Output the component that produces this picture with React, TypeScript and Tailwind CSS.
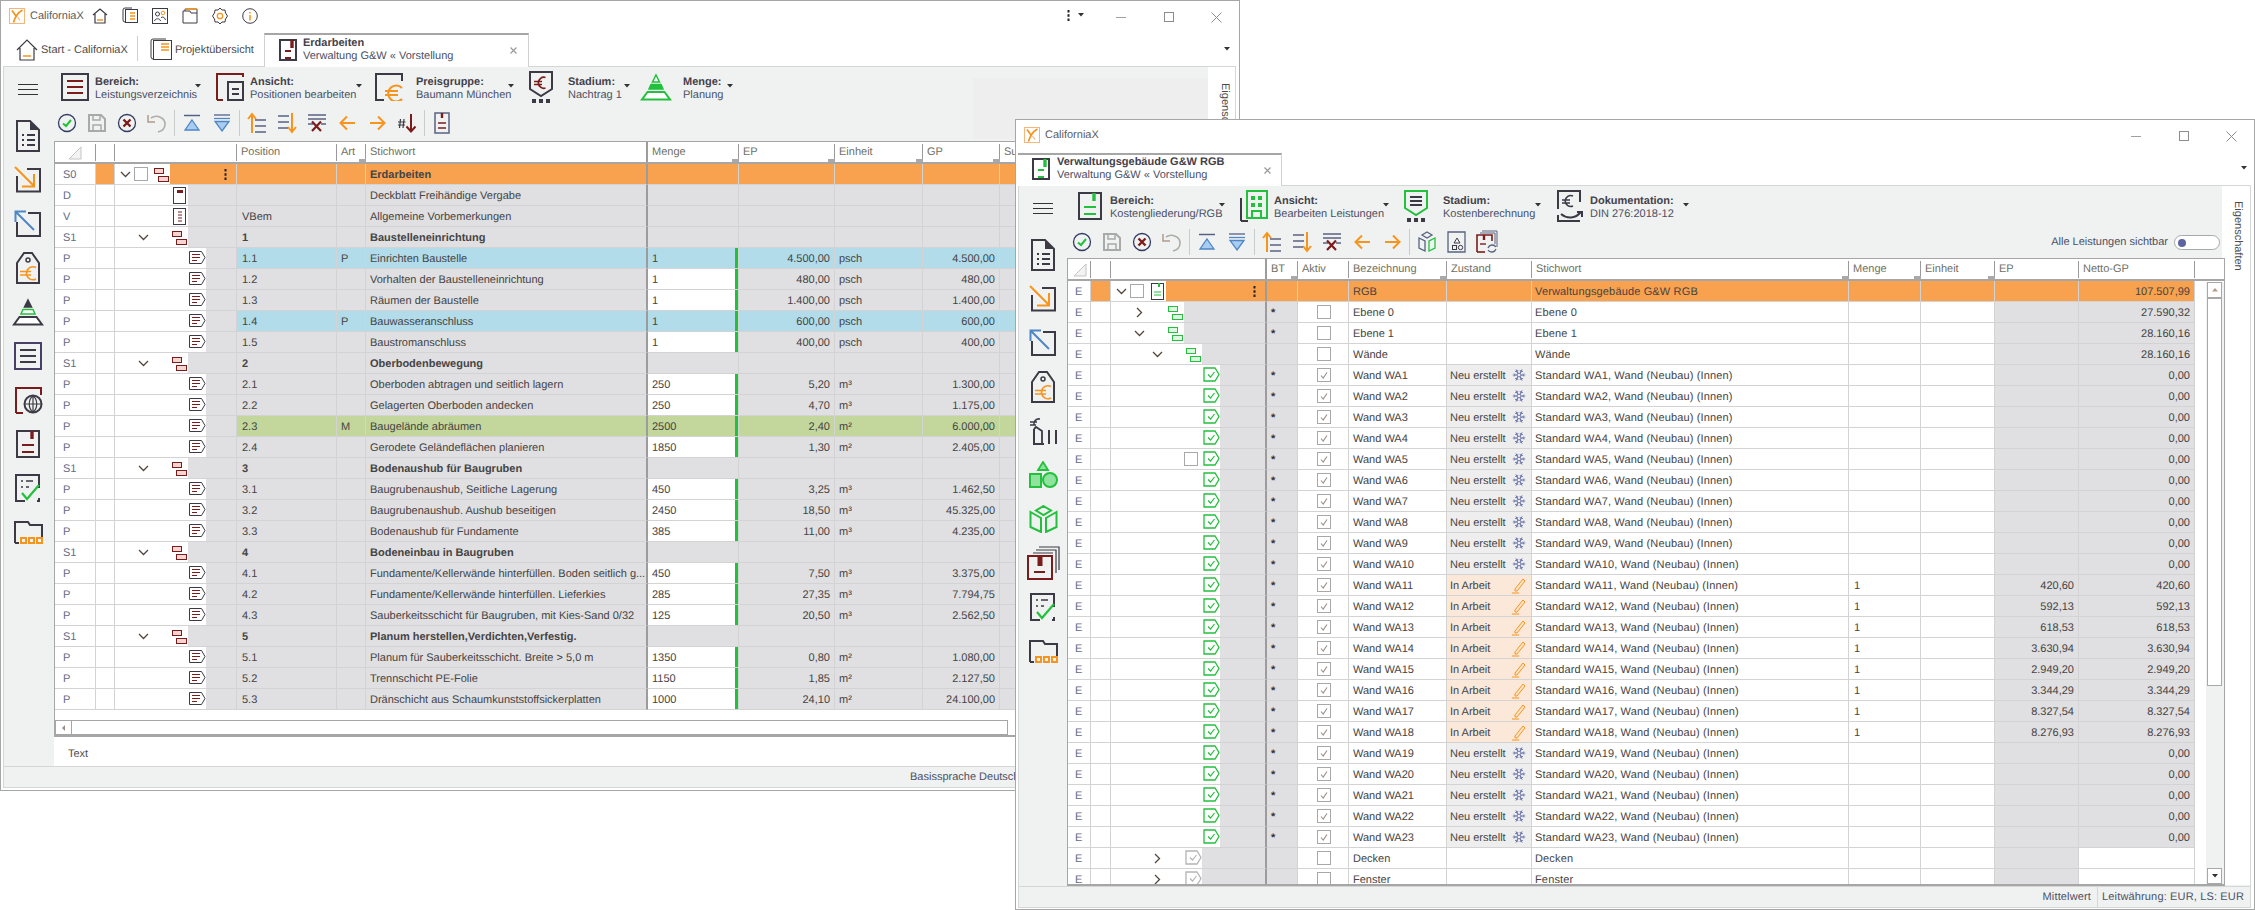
import React from 'react';
import { Snowflake } from 'lucide-react';

const DK = '#3d3a45';
const RD = '#7b1c1c';
const OR = '#f7941d';
const GR = '#22c03c';
const BL = '#4f86c6';
const SL = '#5a6280';

type IcoProps = { w: number; h: number; className?: string; children: React.ReactNode };

const Ico = ({ w, h, className = '', children }: IcoProps) => (
  <svg width={w} height={h} viewBox={`0 0 ${w} ${h}`} fill="none" className={`block shrink-0 ${className}`}>
    {children}
  </svg>
);

/* small grid icons */
const ChevDown = ({ className = '' }: { className?: string }) => (
  <Ico w={11} h={7} className={className}>
    <path d="M1 1L5.5 5.5L10 1" stroke="#54463c" strokeWidth="1.3" />
  </Ico>
);
const ChevRight = ({ className = '' }: { className?: string }) => (
  <Ico w={7} h={11} className={className}>
    <path d="M1 1L5.5 5.5L1 10" stroke="#54463c" strokeWidth="1.3" />
  </Ico>
);
const TreeIco = ({ c, f, className = '' }: { c: string; f: string; className?: string }) => (
  <Ico w={15} h={14} className={className}>
    <rect x="0.5" y="0.5" width="9" height="5" fill={f} stroke={c} />
    <rect x="4.5" y="8.5" width="10" height="5" fill={f} stroke={c} />
  </Ico>
);
const NoteIco = ({ className = '' }: { className?: string }) => (
  <Ico w={17} h={13} className={className}>
    <path d="M0.5 0.5H12.5L16 6.5L12.5 12.5H0.5Z" fill="#fff" stroke={DK} />
    <path d="M3 3.5H11M3 6.5H11M3 9.5H8" stroke={RD} />
  </Ico>
);
const LeafIco = ({ c = GR, className = '' }: { c?: string; className?: string }) => (
  <Ico w={17} h={15} className={className}>
    <path d="M1 1H12L16 7.5L12 14H1Z" fill="#fff" stroke={c} strokeWidth="1.3" />
    <path d="M5 7.5L7.5 10L11.5 5" stroke={c} strokeWidth="1.2" />
  </Ico>
);
const SmallDoc = ({ lines = 3, className = '' }: { lines?: number; className?: string }) => (
  <Ico w={13} h={17} className={className}>
    <rect x="0.5" y="0.5" width="12" height="16" fill="#fff" stroke={DK} />
    {lines === 1 ? <rect x="4" y="3" width="6" height="3" fill={RD} /> : <path d="M5 4H9M5 7H9M5 10H9M5 13H9" stroke={RD} />}
  </Ico>
);
const Dots = () => (
  <Ico w={3} h={11}>
    <path d="M1.5 0V2.5M1.5 4.2V6.7M1.5 8.4V10.9" stroke="#222" strokeWidth="2" />
  </Ico>
);
const Check = ({ on, className = '' }: { on?: boolean; className?: string }) => (
  <Ico w={14} h={14} className={className}>
    <rect x="0.5" y="0.5" width="13" height="13" fill="#fff" stroke="#a8a8a8" />
    {on && <path d="M4 7.5L6.2 10L10 4.5" stroke="#9a8f86" strokeWidth="1.1" />}
  </Ico>
);
const Pencil = () => (
  <Ico w={14} h={17}>
    <path d="M3 12L11 2L13 4L5 14H3Z" fill="#fde4c8" stroke={OR} />
    <path d="M0 16H7" stroke={OR} />
  </Ico>
);
const Corner = () => (
  <Ico w={14} h={14}>
    <path d="M13 1V13H1Z" fill="#f3f3f3" stroke="#c4c4c4" />
  </Ico>
);

/* toolbar icons */
const TbCheck = () => (
  <Ico w={20} h={20}>
    <circle cx="10" cy="10" r="8.5" stroke="#333b63" strokeWidth="1.3" />
    <path d="M6 10.5L9 13L14 7" stroke={GR} strokeWidth="2" />
  </Ico>
);
const TbSave = () => (
  <Ico w={20} h={20}>
    <path d="M2 2H14L18 6V18H2Z" stroke="#a9a9a9" strokeWidth="2" />
    <path d="M6 2V7H13V2M6 18V12H14V18" stroke="#a9a9a9" strokeWidth="1.5" />
  </Ico>
);
const TbCancel = () => (
  <Ico w={20} h={20}>
    <circle cx="10" cy="10" r="8.5" stroke="#333b63" strokeWidth="1.3" />
    <path d="M6.5 6.5L13.5 13.5M13.5 6.5L6.5 13.5" stroke={RD} strokeWidth="2.4" />
  </Ico>
);
const TbUndo = () => (
  <Ico w={20} h={20}>
    <path d="M4 5C10 1 18 5 18 11C18 15 15 18 11 19" stroke="#b0aca8" strokeWidth="1.6" />
    <path d="M1 2V9H8" stroke="#b29c8a" strokeWidth="1.5" />
  </Ico>
);
const TbTop = () => (
  <Ico w={20} h={20}>
    <path d="M2 2.5H18" stroke="#55608a" strokeWidth="1.5" />
    <path d="M10 7L17 17H3Z" fill="#a9cdf0" stroke={BL} strokeWidth="1.3" />
  </Ico>
);
const TbBottom = () => (
  <Ico w={20} h={20}>
    <path d="M2 2H18" stroke="#55608a" strokeWidth="1.3" />
    <path d="M2 5.5H18" stroke={BL} strokeWidth="1.3" />
    <path d="M10 18L17 8.5H3Z" fill="#a9cdf0" stroke={BL} strokeWidth="1.3" />
  </Ico>
);
const TbIndentUp = () => (
  <Ico w={20} h={22}>
    <path d="M5 21V2M1 7L5 2L9 7" stroke={OR} strokeWidth="2" />
    <path d="M8 8H19M8 14H19M8 20H19" stroke={SL} strokeWidth="1.4" />
  </Ico>
);
const TbIndentDown = () => (
  <Ico w={20} h={22}>
    <path d="M15 1V20M11 15L15 20L19 15" stroke={OR} strokeWidth="2" />
    <path d="M1 4H12M1 10H12M1 16H11" stroke={SL} strokeWidth="1.4" />
  </Ico>
);
const TbDelete = () => (
  <Ico w={20} h={20}>
    <path d="M1 2H19M1 6H19M1 11H6M14 11H19" stroke={SL} strokeWidth="1.4" />
    <path d="M5 8.5L14 18M14 8.5L5 18" stroke={RD} strokeWidth="2.2" />
  </Ico>
);
const TbLeft = () => (
  <Ico w={17} h={16}>
    <path d="M16 8H2M8 1.5L1.5 8L8 14.5" stroke={OR} strokeWidth="2" />
  </Ico>
);
const TbRight = () => (
  <Ico w={17} h={16}>
    <path d="M1 8H15M9 1.5L15.5 8L9 14.5" stroke={OR} strokeWidth="2" />
  </Ico>
);
const TbHash = () => (
  <Ico w={20} h={20}>
    <path d="M3.5 6L2.5 15M7 6L6 15M1 9H8.5M1 12H8" stroke={DK} strokeWidth="1.2" />
    <path d="M14 1V18M9.5 13.5L14 18.5L18.5 13.5" stroke={RD} strokeWidth="2" />
  </Ico>
);
const TbDoc = () => (
  <Ico w={16} h={22}>
    <rect x="1" y="1" width="14" height="20" stroke={SL} strokeWidth="1.5" />
    <path d="M8 1V6" stroke={RD} strokeWidth="2.4" />
    <path d="M4 11H12M4 16H12" stroke={RD} strokeWidth="1.6" />
  </Ico>
);
const TbCube = () => (
  <Ico w={20} h={22}>
    <path d="M10 1L15 4L10 7L5 4Z" stroke={SL} strokeWidth="1.3" />
    <path d="M2 7L8 10V20L2 17Z" stroke={SL} strokeWidth="1.3" />
    <path d="M18 7L12 10V20L18 17Z" stroke={GR} strokeWidth="1.3" />
  </Ico>
);
const TbShapes = () => (
  <Ico w={20} h={22}>
    <path d="M1 1H18V21H1Z" stroke={SL} strokeWidth="1.3" />
    <path d="M10 7L13 12H7Z" stroke={DK} />
    <rect x="5.5" y="14.5" width="4" height="4" stroke={DK} />
    <circle cx="13.5" cy="16.5" r="2.2" stroke={DK} />
  </Ico>
);
const TbSync = () => (
  <Ico w={22} h={24}>
    <path d="M6 1H21V17" stroke={SL} />
    <path d="M4 3H19V14" stroke={SL} />
    <path d="M1 22V5H16V11" stroke={RD} strokeWidth="1.6" />
    <path d="M1 22H9" stroke={RD} strokeWidth="1.6" />
    <path d="M8 5V10" stroke={RD} strokeWidth="2.4" />
    <path d="M4 14H10" stroke={RD} strokeWidth="1.4" />
    <path d="M12 18a4.5 4.5 0 0 1 8 -1M20 19a4.5 4.5 0 0 1 -8 1" stroke={SL} strokeWidth="1.3" />
  </Ico>
);

/* sidebar and ribbon icons */
const DocList = () => (
  <Ico w={24} h={32}>
    <path d="M1 1H14L23 10V31H1Z" stroke={DK} strokeWidth="2" />
    <path d="M14 1V10H23" fill={DK} />
    <path d="M6 15H8M11 15H19M6 20H8M11 20H19M6 25H8M11 25H19" stroke={DK} strokeWidth="2" />
  </Ico>
);
const BoxIn = () => (
  <Ico w={28} h={28}>
    <path d="M3 10V25.5H26V3H13" stroke={DK} strokeWidth="2" />
    <path d="M1 1L20 20M20 8V20.5H8" stroke={OR} strokeWidth="2" />
  </Ico>
);
const BoxOut = () => (
  <Ico w={28} h={28}>
    <path d="M3 12V26H26V3H14" stroke={DK} strokeWidth="2" />
    <path d="M20 20L1.5 1.5M1.5 12V1.5H12" stroke={BL} strokeWidth="2" />
  </Ico>
);
const EuroTag = () => (
  <Ico w={24} h={32}>
    <path d="M1 11L8 1H16L23 11V31H1Z" stroke={DK} strokeWidth="2" />
    <circle cx="12" cy="8" r="2" stroke={DK} strokeWidth="1.5" />
    <path d="M20 15.5A6.5 6.5 0 1 0 20 27M4 19.5H15M4 23H15" stroke={OR} strokeWidth="1.6" />
  </Ico>
);
const Pyramid = ({ all }: { all?: boolean }) => {
  const c1 = all ? GR : DK;
  return (
    <Ico w={32} h={28}>
      <path d="M16 2L19.5 9H12.5Z" fill={all ? '#fff' : DK} stroke={c1} strokeWidth="1.5" />
      <path d="M11 11.5H21L23 16H9Z" fill={all ? GR : '#fff'} stroke={GR} strokeWidth="1.5" />
      <path d="M7.5 19H24.5L30 26.5H2Z" fill="#fff" stroke={c1} strokeWidth="2" />
    </Ico>
  );
};
const ListBox = ({ frame, line }: { frame: string; line: string }) => (
  <Ico w={28} h={28}>
    <rect x="1" y="1" width="26" height="26" stroke={frame} strokeWidth="2" />
    <path d="M6 8H22M6 14H22M6 20H22" stroke={line} strokeWidth="2" />
  </Ico>
);
const GlobeDoc = () => (
  <Ico w={29} h={28}>
    <path d="M2 27V2H27V9M2 27H9" stroke={RD} strokeWidth="2" />
    <circle cx="19" cy="18" r="8.5" fill="#eff2f1" stroke={DK} strokeWidth="2" />
    <path d="M10.5 18H27.5M19 9.5V26.5M19 9.5C14 14 14 22 19 26.5C24 22 24 14 19 9.5" stroke={DK} strokeWidth="1.2" />
  </Ico>
);
const MarkDoc = ({ c = RD, w = 24, h = 28 }: { c?: string; w?: number; h?: number }) => (
  <Ico w={w} h={h}>
    <rect x="1" y="1" width={w - 2} height={h - 2} stroke={DK} strokeWidth="2" />
    <path d={`M${w / 2 + 4} 1V9`} stroke={c} strokeWidth="3.4" />
    <path d={`M6 ${h / 2 + 1}H${w - 6}M6 ${h / 2 + 8}H${w - 6}`} stroke={c} strokeWidth="2" />
  </Ico>
);
const CheckDoc = () => (
  <Ico w={26} h={28}>
    <path d="M10 27H1V1H24V14M24 24V27H22" stroke={DK} strokeWidth="2" />
    <path d="M6 7H8M11 7H18M6 13H8M11 13H14" stroke={DK} strokeWidth="1.6" />
    <path d="M7 19L12 25L24 11" stroke={GR} strokeWidth="2.2" />
  </Ico>
);
const FolderDots = () => (
  <Ico w={29} h={24}>
    <path d="M1 23V2H14L16 5H28V17M1 23H5" stroke={DK} strokeWidth="2" />
    <rect x="7" y="18" width="5" height="5" stroke={OR} strokeWidth="2" />
    <rect x="15" y="18" width="5" height="5" stroke={OR} strokeWidth="2" />
    <rect x="23" y="18" width="5" height="5" stroke={OR} strokeWidth="2" />
  </Ico>
);
const EurHome = () => (
  <Ico w={29} h={30}>
    <path d="M11 3A5 5 0 0 0 5 9M1 6H8M1 9H7" stroke={DK} strokeWidth="1.6" />
    <path d="M5 13L7 11L13 15V28" stroke={DK} strokeWidth="1.8" />
    <path d="M5 13V28H15M20 14V28M27 14V28" stroke={DK} strokeWidth="2" />
  </Ico>
);
const Shapes = () => (
  <Ico w={29} h={28}>
    <path d="M14 1L19 9H9Z" fill="#8fe39f" stroke={GR} strokeWidth="1.8" />
    <rect x="1" y="13" width="11" height="13" fill="#8fe39f" stroke={GR} strokeWidth="2" />
    <circle cx="21" cy="19" r="7" fill="#8fe39f" stroke={GR} strokeWidth="2" />
  </Ico>
);
const Cube = () => (
  <Ico w={29} h={28}>
    <path d="M14.5 1L22 5.5L14.5 10L7 5.5Z" stroke={GR} strokeWidth="2" />
    <path d="M1.5 7L12 13V27L1.5 22Z" stroke={GR} strokeWidth="2" />
    <path d="M27.5 7L17 13V27L27.5 22Z" stroke={GR} strokeWidth="2" />
  </Ico>
);
const DocStack = () => (
  <Ico w={33} h={34}>
    <path d="M12 1H32V24M9 4H29V27M6 7H26" stroke={DK} strokeWidth="1.2" />
    <rect x="1" y="10" width="24" height="23" fill="#eff2f1" stroke={RD} strokeWidth="2" />
    <path d="M13 10V20" stroke={RD} strokeWidth="5" />
    <path d="M7 26H18" stroke={RD} strokeWidth="2" />
  </Ico>
);
const AnsichtIco = () => (
  <Ico w={29} h={28}>
    <path d="M1 27V1H27V4" stroke={RD} strokeWidth="2" />
    <path d="M1 27H7" stroke={RD} strokeWidth="2" />
    <rect x="12" y="9" width="15" height="18" stroke={DK} strokeWidth="2" />
    <path d="M16 16H23M16 21H23" stroke={DK} strokeWidth="2" />
  </Ico>
);
const PreisIco = () => (
  <Ico w={30} h={28}>
    <path d="M9 27H1V1H27V8" stroke={DK} strokeWidth="2" />
    <path d="M27 15A8 8 0 1 0 27 26M10 18H23M10 22H23" stroke={OR} strokeWidth="2" />
  </Ico>
);
const StageIco = ({ c = DK }: { c?: string }) => (
  <Ico w={24} h={32}>
    <path d="M1 1H23V18L12 25L1 18Z" stroke={c} strokeWidth="2" />
    <path d="M16.5 6.5A5.5 5.5 0 1 0 16.5 17M5 10.5H13M5 13.5H13" stroke={RD} strokeWidth="1.7" />
    <path d="M3 28H7V32H3ZM10 28H14V32H10ZM17 28H21V32H17Z" fill={DK} />
  </Ico>
);
const StageGreen = () => (
  <Ico w={24} h={32}>
    <path d="M1 1H23V18L12 25L1 18Z" stroke={GR} strokeWidth="2" />
    <path d="M6 7H18M6 11H18M6 15H18" stroke={DK} strokeWidth="2" />
    <path d="M3 28H7V32H3ZM10 28H14V32H10ZM17 28H21V32H17Z" fill={DK} />
  </Ico>
);
const BuildingIco = () => (
  <Ico w={28} h={32}>
    <path d="M1 31V8M1 31H8" stroke={DK} strokeWidth="2" />
    <rect x="7" y="1" width="20" height="27" fill="#eff2f1" stroke={GR} strokeWidth="2" />
    <path d="M11 6H15V10H11ZM18 6H22V10H18ZM11 13H15V17H11ZM18 13H22V17H18Z" fill={GR} />
    <path d="M12 28V21H21V28" stroke={GR} strokeWidth="2" />
  </Ico>
);
const DokuIco = () => (
  <Ico w={29} h={32}>
    <path d="M2 19V1H24V12M2 25V31H24" stroke={DK} strokeWidth="2" />
    <path d="M17 6A5.5 5.5 0 1 0 17 16M6 10H14M6 13H14" stroke={DK} strokeWidth="1.6" />
    <path d="M5 24C11 29 19 29 25 22M21 22H26V27" stroke={DK} strokeWidth="2" />
  </Ico>
);
const Logo = () => (
  <Ico w={16} h={16}>
    <rect x="0.5" y="0.5" width="15" height="15" fill="#fff" stroke="#f6b57a" />
    <path d="M3 2.5L7 8M13.5 2C9 4.5 6 9 4.5 14.5" stroke={OR} strokeWidth="1.7" />
    <path d="M8.5 9L11 12.5" stroke="#f6b57a" strokeWidth="1.2" />
  </Ico>
);
const Home = ({ s = 16 }: { s?: number }) => (
  <Ico w={s} h={s} >
    <path d={s > 16 ? 'M1 11L11 1L21 11M4 9V21H18V9' : 'M1 7L8 1L15 7M3 6V15H13V6'} stroke={DK} strokeWidth="1.2" />
    <path d={s > 16 ? 'M7 17H15' : 'M5 12H11'} stroke={OR} strokeWidth="1.5" />
  </Ico>
);
const BookIco = ({ s = 16 }: { s?: number }) => (
  <Ico w={s} h={s + 2}>
    <rect x="3.5" y="2.5" width={s - 4} height={s - 3} stroke={DK} fill="#fff" />
    <path d={`M3 ${s - 1}A2 2 0 0 1 1 ${s - 3}V3A2 2 0 0 1 3 1H${s - 6}`} stroke={DK} />
    <path d={`M${s / 2} 6H${s - 3}M${s / 2} 9H${s - 3}M${s / 2} 12H${s - 3}`} stroke={OR} strokeWidth="1.3" />
  </Ico>
);
const PeopleIco = () => (
  <Ico w={16} h={16}>
    <rect x="0.5" y="0.5" width="15" height="15" stroke={DK} />
    <circle cx="5.5" cy="6" r="2" stroke={DK} />
    <circle cx="11" cy="5" r="1.8" stroke={OR} />
    <path d="M2.5 13C3 10 8 10 8.5 13M9 9.5C11 8.5 13 9.5 13.5 12" stroke={DK} />
  </Ico>
);
const FolderIco = () => (
  <Ico w={16} h={16}>
    <path d="M3 3V1H15V15H1V3H8L9 5H15" stroke={DK} />
    <path d="M3 1H15" stroke={OR} strokeWidth="1.5" />
  </Ico>
);
const GearIco = () => (
  <Ico w={16} h={18}>
    <path d="M8 1L10 3L13 3L13.5 6L15.5 9L13.5 12L13 15L10 15L8 17L6 15L3 15L2.5 12L.5 9L2.5 6L3 3L6 3Z" stroke={DK} />
    <circle cx="8" cy="9" r="2.7" stroke={OR} strokeWidth="1.3" />
  </Ico>
);
const InfoIco = () => (
  <Ico w={16} h={16}>
    <circle cx="8" cy="8" r="7.3" stroke={DK} />
    <path d="M8 4V5.5M8 7V12.5" stroke={OR} strokeWidth="1.5" />
  </Ico>
);
const ArrowDrop = ({ className = '' }: { className?: string }) => (
  <Ico w={6} h={4} className={className}>
    <path d="M0 0H6L3 3.5Z" fill="#333" />
  </Ico>
);
const WinButtons = () => (
  <>
    <div className="absolute right-[113px] top-[16px] h-px w-[10px] bg-[#a0a0a0]" />
    <div className="absolute right-[65px] top-[11px] size-[10px] border border-[#8c8c8c]" />
    <Ico w={11} h={11} className="absolute right-[17px] top-[11px]">
      <path d="M0.5 0.5L10.5 10.5M10.5 0.5L0.5 10.5" stroke="#8c8c8c" />
    </Ico>
  </>
);

/* pieces shared by both windows */
const Side = ({ className, children }: { className: string; children: React.ReactNode }) => (
  <div className={`absolute flex flex-col items-center ${className}`}>
    {React.Children.map(children, (c) => (
      <div className="flex h-[44px] w-[40px] items-center justify-center">{c}</div>
    ))}
  </div>
);
const Burger = ({ className }: { className: string }) => (
  <div className={`absolute flex h-[11px] w-[20px] flex-col justify-between ${className}`}>
    <div className="h-px bg-[#333]" />
    <div className="h-px bg-[#333]" />
    <div className="h-px bg-[#333]" />
  </div>
);
const Ribbon = ({ w, iconW, chev, title, sub, children }: { w: string; iconW: string; chev: string; title: string; sub: string; children: React.ReactNode }) => (
  <div className={`relative flex h-[34px] shrink-0 ${w}`}>
    <div className={`flex items-center ${iconW}`}>{children}</div>
    <div className="whitespace-nowrap pt-[6px] leading-[13px]">
      <div className="font-bold text-[#44414a]">{title}</div>
      <div className="text-[#4c5064]">{sub}</div>
    </div>
    <ArrowDrop className={`absolute top-[14px] ${chev}`} />
  </div>
);
const Tb = ({ children }: { children: React.ReactNode }) => (
  <div className="flex h-[30px] w-[30px] shrink-0 items-center justify-center">{children}</div>
);
const TbSep = () => (
  <div className="flex h-[30px] w-[5px] shrink-0 justify-center">
    <div className="mt-[2px] h-[26px] w-px bg-[#c9cccb]" />
  </div>
);
const HeadCell = ({ label, handle, thick, last }: { label?: string; handle?: boolean; thick?: boolean; last?: boolean }) => (
  <div className={`relative h-[20px] pl-[4px] pt-[4px] leading-[13px] text-[#70705f] ${thick ? 'border-r-2 border-[#9c9c9c]' : ''}`}>
    {label}
    {!thick && !last && <div className="absolute bottom-[1px] right-0 top-[2px] w-px bg-[#9a9a9a]" />}
    {handle && <div className="absolute bottom-0 right-0 h-[3px] w-[7px] bg-[#a9a9a9]" />}
  </div>
);
const Cell = ({ className = '', children }: { className?: string; children?: React.ReactNode }) => (
  <div className={`relative h-[21px] overflow-hidden whitespace-nowrap border-b border-r border-[#d3d3d3] leading-[22px] ${className}`}>
    {children}
  </div>
);

const GREY = 'bg-[#e0dfe1]';
const ORANGE = 'bg-[#f8a14e]';

/* Erdarbeiten */
type PosRow = { t: string; k: 'root' | 'doc1' | 'doc2' | 'sec' | 'pos'; pos?: string; art?: string; txt: string; q?: string; ep?: string; u?: string; gp?: string; hl?: string };
const P = (pos: string, txt: string, q: string, ep: string, u: string, gp: string, art?: string, hl?: string): PosRow => ({ t: 'P', k: 'pos', pos, txt, q, ep, u, gp, art, hl });
const S = (pos: string, txt: string): PosRow => ({ t: 'S1', k: 'sec', pos, txt });
const BLUE = 'bg-[#b2dcea]';
const LIME = 'bg-[#c3d69b]';
const posRows: PosRow[] = [
  { t: 'S0', k: 'root', txt: 'Erdarbeiten', hl: ORANGE },
  { t: 'D', k: 'doc1', txt: 'Deckblatt Freihändige Vergabe' },
  { t: 'V', k: 'doc2', pos: 'VBem', txt: 'Allgemeine Vorbemerkungen' },
  S('1', 'Baustelleneinrichtung'),
  P('1.1', 'Einrichten Baustelle', '1', '4.500,00', 'psch', '4.500,00', 'P', BLUE),
  P('1.2', 'Vorhalten der Baustelleneinrichtung', '1', '480,00', 'psch', '480,00'),
  P('1.3', 'Räumen der Baustelle', '1', '1.400,00', 'psch', '1.400,00'),
  P('1.4', 'Bauwasseranschluss', '1', '600,00', 'psch', '600,00', 'P', BLUE),
  P('1.5', 'Baustromanschluss', '1', '400,00', 'psch', '400,00'),
  S('2', 'Oberbodenbewegung'),
  P('2.1', 'Oberboden abtragen und seitlich lagern', '250', '5,20', 'm³', '1.300,00'),
  P('2.2', 'Gelagerten Oberboden andecken', '250', '4,70', 'm³', '1.175,00'),
  P('2.3', 'Baugelände abräumen', '2500', '2,40', 'm²', '6.000,00', 'M', LIME),
  P('2.4', 'Gerodete Geländeflächen planieren', '1850', '1,30', 'm²', '2.405,00'),
  S('3', 'Bodenaushub für Baugruben'),
  P('3.1', 'Baugrubenaushub, Seitliche Lagerung', '450', '3,25', 'm³', '1.462,50'),
  P('3.2', 'Baugrubenaushub. Aushub beseitigen', '2450', '18,50', 'm³', '45.325,00'),
  P('3.3', 'Bodenaushub für Fundamente', '385', '11,00', 'm³', '4.235,00'),
  S('4', 'Bodeneinbau in Baugruben'),
  P('4.1', 'Fundamente/Kellerwände hinterfüllen. Boden seitlich g...', '450', '7,50', 'm³', '3.375,00'),
  P('4.2', 'Fundamente/Kellerwände hinterfüllen. Lieferkies', '285', '27,35', 'm³', '7.794,75'),
  P('4.3', 'Sauberkeitsschicht für Baugruben, mit Kies-Sand 0/32', '125', '20,50', 'm³', '2.562,50'),
  S('5', 'Planum herstellen,Verdichten,Verfestig.'),
  P('5.1', 'Planum für Sauberkeitsschicht. Breite > 5,0 m', '1350', '0,80', 'm²', '1.080,00'),
  P('5.2', 'Trennschicht PE-Folie', '1150', '1,85', 'm²', '2.127,50'),
  P('5.3', 'Dränschicht aus Schaumkunststoffsickerplatten', '1000', '24,10', 'm²', '24.100,00'),
];

const W1_COLS = 'grid-cols-[41px_19px_122px_100px_29px_282px_91px_96px_88px_77px_120px]';

const PosTree = ({ r }: { r: PosRow }) => {
  const white = r.k === 'root' ? 'w-[55px]' : r.k === 'pos' ? 'w-[91px]' : 'w-[73px]';
  return (
    <Cell className={r.k === 'root' ? ORANGE : GREY}>
      <div className={`absolute bottom-0 left-0 top-0 bg-white ${white}`} />
      {r.k === 'root' && (
        <>
          <ChevDown className="absolute left-[5px] top-[7px]" />
          <Check className="absolute left-[19px] top-[3px]" />
          <TreeIco c={RD} f="#f6d4d0" className="absolute left-[39px] top-[4px]" />
          <div className="absolute left-[109px] top-[5px]"><Dots /></div>
        </>
      )}
      {r.k === 'doc1' && <SmallDoc lines={1} className="absolute left-[58px] top-[2px]" />}
      {r.k === 'doc2' && <SmallDoc className="absolute left-[58px] top-[2px]" />}
      {r.k === 'sec' && (
        <>
          <ChevDown className="absolute left-[23px] top-[7px]" />
          <TreeIco c={RD} f="#f6d4d0" className="absolute left-[57px] top-[4px]" />
        </>
      )}
      {r.k === 'pos' && <NoteIco className="absolute left-[74px] top-[3px]" />}
    </Cell>
  );
};

const PosGridRow = ({ r }: { r: PosRow }) => {
  const bg = r.hl ?? GREY;
  const strong = r.k === 'sec' || r.k === 'root';
  return (
    <div className={`grid h-[21px] ${W1_COLS}`}>
      <Cell className="pl-[8px] text-[#5f6b86]">{r.t}</Cell>
      <Cell className={r.k === 'root' ? ORANGE : 'bg-white'} />
      <PosTree r={r} />
      <Cell className={`pl-[5px] ${bg} ${strong ? 'font-bold' : ''}`}>{r.pos}</Cell>
      <Cell className={`pl-[4px] ${bg}`}>{r.art}</Cell>
      <Cell className={`border-r-2 border-r-[#9c9c9c] pl-[4px] ${bg} ${strong ? 'font-bold' : ''}`}>{r.txt}</Cell>
      <Cell className={`pl-[4px] ${r.hl ?? (r.k === 'pos' ? 'bg-white' : GREY)}`}>
        {r.q}
        {r.k === 'pos' && <div className="absolute bottom-0 right-0 top-0 w-[3px] bg-[#1fc13d]" />}
      </Cell>
      <Cell className={`pr-[4px] text-right ${bg}`}>{r.ep}</Cell>
      <Cell className={`pl-[4px] ${bg}`}>{r.u}</Cell>
      <Cell className={`pr-[4px] text-right ${bg}`}>{r.gp}</Cell>
      <Cell className={bg} />
    </div>
  );
};

const ErdarbeitenWindow = () => (
  <div className="absolute left-0 top-0 h-[791px] w-[1240px] border border-[#a6a6a6] bg-white">
    <div className="absolute left-[8px] top-[7px] flex items-center">
      <Logo />
      <span className="ml-[5px] text-[#5d5d5d]">CaliforniaX</span>
    </div>
    <div className="absolute left-[84px] top-[6px] flex items-center">
      {[<Home key="h" />, <BookIco key="b" />, <PeopleIco key="p" />, <FolderIco key="f" />, <GearIco key="g" />, <InfoIco key="i" />].map((ic, i) => (
        <div key={i} className="flex h-[18px] w-[30px] items-center justify-center">{ic}</div>
      ))}
    </div>
    <div className="absolute left-[1066px] top-[9px]"><Dots /></div>
    <ArrowDrop className="absolute left-[1077px] top-[12px]" />
    <WinButtons />
    <ArrowDrop className="absolute left-[1223px] top-[46px]" />

    {/* tabs */}
    <div className="absolute left-[15px] top-[36px] flex h-[26px] items-center">
      <Home s={22} />
      <span className="ml-[3px] text-[#4c4c4c]">Start - CaliforniaX</span>
    </div>
    <div className="absolute left-[136px] top-[35px] h-[25px] w-px bg-[#cfcfcf]" />
    <div className="absolute left-[149px] top-[36px] flex h-[26px] items-center">
      <BookIco s={22} />
      <span className="ml-[3px] text-[#4c4c4c]">Projektübersicht</span>
    </div>
    <div className="absolute left-[263px] top-[32px] z-10 h-[34px] w-[265px] border-x border-t-[2px] border-x-[#d2d2d2] border-t-[#a6a6a6] bg-white">
      <div className="absolute left-[14px] top-[4px]"><MarkDoc w={18} h={22} /></div>
      <div className="absolute left-[38px] top-[2px] whitespace-nowrap leading-[13px]">
        <div className="font-bold text-[#44414a]">Erdarbeiten</div>
        <div className="text-[#4c5064]">Verwaltung G&amp;W « Vorstellung</div>
      </div>
      <Ico w={7} h={7} className="absolute right-[11px] top-[12px]">
        <path d="M0.5 0.5L6.5 6.5M6.5 0.5L0.5 6.5" stroke="#9a9a9a" strokeWidth="1.2" />
      </Ico>
    </div>

    {/* panel */}
    <div className="absolute left-[2px] top-[65px] h-[722px] w-[1233px] border border-[#d4d7d6] bg-[#eff2f1]">
      <div className="absolute left-[969px] top-[11px] h-[61px] w-[236px] bg-[#eeeeee]" />
      <div className="absolute bottom-0 right-0 top-0 w-[27px] bg-white" />
      <div className="absolute right-[4px] top-[16px] text-[11px] leading-[13px] text-[#4c4c4c] [writing-mode:vertical-rl]">Eigenschaften</div>
    </div>
    <Burger className="left-[17px] top-[83px]" />
    <Side className="left-[7px] top-[113px]">
      <DocList />
      <BoxIn />
      <BoxOut />
      <EuroTag />
      <Pyramid />
      <ListBox frame="#4a3f66" line={DK} />
      <GlobeDoc />
      <MarkDoc />
      <CheckDoc />
      <FolderDots />
    </Side>

    <div className="absolute left-[60px] top-[69px] flex">
      <Ribbon w="w-[155px]" iconW="w-[34px]" chev="left-[134px]" title="Bereich:" sub="Leistungsverzeichnis">
        <ListBox frame={DK} line={RD} />
      </Ribbon>
      <Ribbon w="w-[159px]" iconW="w-[34px]" chev="left-[140px]" title="Ansicht:" sub="Positionen bearbeiten">
        <AnsichtIco />
      </Ribbon>
      <Ribbon w="w-[154px]" iconW="w-[41px]" chev="left-[133px]" title="Preisgruppe:" sub="Baumann München">
        <PreisIco />
      </Ribbon>
      <Ribbon w="w-[111px]" iconW="w-[39px]" chev="left-[95px]" title="Stadium:" sub="Nachtrag 1">
        <StageIco />
      </Ribbon>
      <Ribbon w="w-[100px]" iconW="w-[43px]" chev="left-[87px]" title="Menge:" sub="Planung">
        <Pyramid all />
      </Ribbon>
    </div>

    <div className="absolute left-[51px] top-[107px] flex">
      <Tb><TbCheck /></Tb>
      <Tb><TbSave /></Tb>
      <Tb><TbCancel /></Tb>
      <Tb><TbUndo /></Tb>
      <TbSep />
      <Tb><TbTop /></Tb>
      <Tb><TbBottom /></Tb>
      <TbSep />
      <Tb><TbIndentUp /></Tb>
      <Tb><TbIndentDown /></Tb>
      <Tb><TbDelete /></Tb>
      <Tb><TbLeft /></Tb>
      <Tb><TbRight /></Tb>
      <Tb><TbHash /></Tb>
      <TbSep />
      <Tb><TbDoc /></Tb>
    </div>

    {/* grid */}
    <div className="absolute left-[53px] top-[140px] h-[596px] w-[1155px] overflow-hidden border-l border-t border-[#a6a6a6] bg-white">
      <div className={`grid border-b-2 border-[#a6a6a6] ${W1_COLS}`}>
        <HeadCell />
        <HeadCell />
        <HeadCell />
        <HeadCell label="Position" />
        <HeadCell label="Art" handle />
        <HeadCell label="Stichwort" thick />
        <HeadCell label="Menge" handle />
        <HeadCell label="EP" handle />
        <HeadCell label="Einheit" handle />
        <HeadCell label="GP" handle />
        <HeadCell label="Summe" />
      </div>
      <div className="absolute left-[13px] top-[4px]"><Corner /></div>
      {posRows.map((r, i) => (
        <PosGridRow key={i} r={r} />
      ))}
      <div className="absolute left-0 top-[578px] flex h-[15px] w-[953px] border border-[#a6a6a6] bg-white">
        <div className="flex w-[16px] items-center justify-center border-r border-[#a6a6a6]">
          <Ico w={3} h={6}><path d="M3 0V6L0 3Z" fill="#9b8f85" /></Ico>
        </div>
      </div>
      <div className="absolute bottom-0 left-0 right-0 h-[2px] bg-[#a6a6a6]" />
    </div>
    <div className="absolute left-[53px] top-[736px] h-[29px] w-[1155px] bg-white pl-[14px] pt-[11px] leading-[13px] text-[#4c4c4c]">Text</div>
    <div className="absolute left-[3px] top-[765px] h-[21px] w-[1231px] border-t border-[#d4d7d6] bg-[#eff2f1] pl-[906px] pt-[4px] leading-[13px] text-[#4c5064]">Basissprache Deutsch</div>
  </div>
);

/* Verwaltungsgebäude */
type ElemRow = { k: 'root' | 'lvl1' | 'lvl2' | 'leaf' | 'off'; open?: boolean; name: string; word: string; state?: 'new' | 'work'; on?: boolean; star?: boolean; box?: boolean; ep?: string; gp?: string; q?: string };
const wandEp: Record<number, string> = { 11: '420,60', 12: '592,13', 13: '618,53', 14: '3.630,94', 15: '2.949,20', 16: '3.344,29', 17: '8.327,54', 18: '8.276,93' };
const elemRows: ElemRow[] = [
  { k: 'root', open: true, name: 'RGB', word: 'Verwaltungsgebäude G&W RGB', gp: '107.507,99' },
  { k: 'lvl1', name: 'Ebene 0', word: 'Ebene 0', gp: '27.590,32', star: true },
  { k: 'lvl1', open: true, name: 'Ebene 1', word: 'Ebene 1', gp: '28.160,16', star: true },
  { k: 'lvl2', open: true, name: 'Wände', word: 'Wände', gp: '28.160,16' },
  ...Array.from({ length: 23 }, (_, i): ElemRow => {
    const n = i + 1;
    const ep = wandEp[n];
    return {
      k: 'leaf',
      name: `Wand WA${n}`,
      word: `Standard WA${n}, Wand (Neubau) (Innen)`,
      state: ep ? 'work' : 'new',
      on: true,
      star: true,
      box: n === 5,
      ep,
      gp: ep ?? '0,00',
      q: ep ? '1' : undefined,
    };
  }),
  { k: 'off', name: 'Decken', word: 'Decken' },
  { k: 'off', name: 'Fenster', word: 'Fenster' },
];

const W2_COLS = 'grid-cols-[23px_20px_156px_31px_51px_98px_85px_317px_72px_74px_84px_116px]';

const ElemTree = ({ r }: { r: ElemRow }) => {
  const white = { root: 'w-[55px]', lvl1: 'w-[73px]', lvl2: 'w-[91px]', leaf: 'w-[109px]', off: 'w-[91px]' }[r.k];
  return (
    <Cell className={`border-r-2 border-r-[#9c9c9c] ${r.k === 'root' ? ORANGE : GREY}`}>
      <div className={`absolute bottom-0 left-0 top-0 bg-white ${white}`} />
      {r.k === 'root' && (
        <>
          <ChevDown className="absolute left-[5px] top-[7px]" />
          <Check className="absolute left-[19px] top-[3px]" />
          <div className="absolute left-[40px] top-[2px]">
            <Ico w={13} h={17}>
              <rect x="0.5" y="0.5" width="12" height="16" fill="#fff" stroke={DK} />
              <path d="M8 0V4" stroke={GR} strokeWidth="2" />
              <path d="M3 9H10M3 12H10" stroke={GR} />
            </Ico>
          </div>
          <div className="absolute left-[142px] top-[5px]"><Dots /></div>
        </>
      )}
      {r.k === 'lvl1' && (
        <>
          {r.open ? <ChevDown className="absolute left-[23px] top-[7px]" /> : <ChevRight className="absolute left-[25px] top-[5px]" />}
          <TreeIco c={GR} f="#ddf7e2" className="absolute left-[57px] top-[4px]" />
        </>
      )}
      {r.k === 'lvl2' && (
        <>
          <ChevDown className="absolute left-[41px] top-[7px]" />
          <TreeIco c={GR} f="#ddf7e2" className="absolute left-[75px] top-[4px]" />
        </>
      )}
      {r.k === 'leaf' && (
        <>
          {r.box && <Check className="absolute left-[73px] top-[3px]" />}
          <LeafIco className="absolute left-[92px] top-[2px]" />
        </>
      )}
      {r.k === 'off' && (
        <>
          <ChevRight className="absolute left-[43px] top-[5px]" />
          <LeafIco c="#b5b5b5" className="absolute left-[74px] top-[2px]" />
        </>
      )}
    </Cell>
  );
};

const ElemGridRow = ({ r }: { r: ElemRow }) => {
  const root = r.k === 'root';
  const fill = root ? ORANGE : 'bg-white';
  return (
    <div className={`grid h-[21px] ${W2_COLS}`}>
      <Cell className="pl-[7px] text-[#5f6b86]">E</Cell>
      <Cell className={fill} />
      <ElemTree r={r} />
      <Cell className={`pl-[4px] font-bold leading-[14px] text-[#333] ${root ? ORANGE : GREY}`}>{r.star && '*'}</Cell>
      <Cell className={fill}>
        {!root && <Check on={r.on} className="absolute left-[19px] top-[3px]" />}
      </Cell>
      <Cell className={`pl-[4px] ${fill}`}>{r.name}</Cell>
      <Cell className={r.state === 'new' ? 'bg-[#eeeeee] pl-[3px]' : r.state === 'work' ? 'bg-[#fbe8d8] pl-[3px]' : fill}>
        {r.state === 'new' && (
          <>
            Neu erstellt
            <Snowflake size={14} strokeWidth={1.6} className="absolute right-[5px] top-[3px] text-[#6670a8]" />
          </>
        )}
        {r.state === 'work' && (
          <>
            In Arbeit
            <div className="absolute right-[5px] top-[2px]"><Pencil /></div>
          </>
        )}
      </Cell>
      <Cell className={`pl-[3px] tracking-[0.15px] ${fill}`}>{r.word}</Cell>
      <Cell className={`pl-[5px] ${fill}`}>{r.q}</Cell>
      <Cell className={fill} />
      <Cell className={`pr-[4px] text-right ${root ? ORANGE : GREY}`}>{r.ep}</Cell>
      <Cell className={`pr-[4px] text-right ${root ? ORANGE : r.gp ? GREY : 'bg-white'}`}>{r.gp}</Cell>
    </div>
  );
};

const ElementWindow = () => (
  <div className="absolute left-[1015px] top-[119px] z-20 h-[791px] w-[1240px] border border-[#a6a6a6] bg-white">
    <div className="absolute left-[8px] top-[7px] flex items-center">
      <Logo />
      <span className="ml-[5px] text-[#5d5d5d]">CaliforniaX</span>
    </div>
    <WinButtons />
    <ArrowDrop className="absolute right-[7px] top-[46px]" />

    <div className="absolute left-[2px] top-[33px] z-10 h-[33px] w-[264px] border-r border-t-[2px] border-r-[#d2d2d2] border-t-[#a6a6a6] bg-white">
      <div className="absolute left-[14px] top-[3px]"><MarkDoc c={GR} w={18} h={22} /></div>
      <div className="absolute left-[39px] top-[1px] whitespace-nowrap leading-[13px]">
        <div className="font-bold text-[#44414a]">Verwaltungsgebäude G&amp;W RGB</div>
        <div className="text-[#4c5064]">Verwaltung G&amp;W « Vorstellung</div>
      </div>
      <Ico w={7} h={7} className="absolute right-[10px] top-[12px]">
        <path d="M0.5 0.5L6.5 6.5M6.5 0.5L0.5 6.5" stroke="#9a9a9a" strokeWidth="1.2" />
      </Ico>
    </div>

    <div className="absolute left-[2px] top-[65px] h-[723px] w-[1233px] border border-[#d4d7d6] bg-[#eff2f1]">
      <div className="absolute bottom-[22px] right-0 top-0 w-[28px] bg-white" />
      <div className="absolute right-[6px] top-[15px] leading-[13px] text-[#4c4c4c] [writing-mode:vertical-rl]">Eigenschaften</div>
    </div>
    <Burger className="left-[17px] top-[83px]" />
    <Side className="left-[7px] top-[113px]">
      <DocList />
      <BoxIn />
      <BoxOut />
      <EuroTag />
      <EurHome />
      <Shapes />
      <Cube />
      <DocStack />
      <CheckDoc />
      <FolderDots />
    </Side>

    <div className="absolute left-[62px] top-[69px] flex">
      <Ribbon w="w-[162px]" iconW="w-[32px]" chev="left-[141px]" title="Bereich:" sub="Kostengliederung/RGB">
        <MarkDoc c={GR} />
      </Ribbon>
      <Ribbon w="w-[164px]" iconW="w-[34px]" chev="left-[143px]" title="Ansicht:" sub="Bearbeiten Leistungen">
        <BuildingIco />
      </Ribbon>
      <Ribbon w="w-[152px]" iconW="w-[39px]" chev="left-[131px]" title="Stadium:" sub="Kostenberechnung">
        <StageGreen />
      </Ribbon>
      <Ribbon w="w-[140px]" iconW="w-[34px]" chev="left-[127px]" title="Dokumentation:" sub="DIN 276:2018-12">
        <DokuIco />
      </Ribbon>
    </div>

    <div className="absolute left-[51px] top-[107px] flex">
      <Tb><TbCheck /></Tb>
      <Tb><TbSave /></Tb>
      <Tb><TbCancel /></Tb>
      <Tb><TbUndo /></Tb>
      <TbSep />
      <Tb><TbTop /></Tb>
      <Tb><TbBottom /></Tb>
      <TbSep />
      <Tb><TbIndentUp /></Tb>
      <Tb><TbIndentDown /></Tb>
      <Tb><TbDelete /></Tb>
      <Tb><TbLeft /></Tb>
      <Tb><TbRight /></Tb>
      <TbSep />
      <Tb><TbCube /></Tb>
      <Tb><TbShapes /></Tb>
      <Tb><TbSync /></Tb>
    </div>
    <div className="absolute right-[86px] top-[116px] leading-[13px] text-[#4c5064]">Alle Leistungen sichtbar</div>
    <div className="absolute left-[1158px] top-[115px] h-[15px] w-[46px] rounded-full border border-[#a8a8a8] bg-white">
      <div className="absolute left-[3px] top-[2.5px] size-[8px] rounded-full bg-[#5f64a0]" />
    </div>

    {/* grid */}
    <div className="absolute left-[51px] top-[138px] h-[628px] w-[1158px] overflow-hidden border-x border-b-2 border-t border-[#a6a6a6] bg-white">
      <div className={`grid border-b-2 border-[#a6a6a6] ${W2_COLS}`}>
        <HeadCell />
        <HeadCell />
        <HeadCell thick />
        <HeadCell label="BT" handle />
        <HeadCell label="Aktiv" />
        <HeadCell label="Bezeichnung" handle />
        <HeadCell label="Zustand" />
        <HeadCell label="Stichwort" handle />
        <HeadCell label="Menge" handle />
        <HeadCell label="Einheit" handle />
        <HeadCell label="EP" />
        <HeadCell label="Netto-GP" />
      </div>
      <div className="absolute left-[5px] top-[4px]"><Corner /></div>
      {elemRows.map((r, i) => (
        <ElemGridRow key={i} r={r} />
      ))}
      <div className="absolute bottom-0 left-[1127px] top-[23px] w-[30px] bg-white">
        <div className="absolute bottom-0 left-[11px] right-0 top-0 bg-[#eff2f1]" />
        <div className="absolute left-[12px] top-0 flex h-[16px] w-[15px] items-center justify-center border border-[#a8a8a8] bg-white">
          <Ico w={6} h={4}><path d="M0 3.5H6L3 0Z" fill="#b49a84" /></Ico>
        </div>
        <div className="absolute left-[12px] top-[16px] h-[388px] w-[15px] border border-[#a8a8a8] bg-white" />
        <div className="absolute bottom-0 left-[12px] flex h-[16px] w-[15px] items-center justify-center border border-[#a8a8a8] bg-white">
          <ArrowDrop />
        </div>
      </div>
    </div>
    <div className="absolute left-[3px] top-[766px] flex h-[21px] w-[1231px] justify-end border-t border-[#d4d7d6] bg-[#eff2f1] leading-[21px] tracking-[0.15px] text-[#4c5064]">
      <span className="pr-[6px]">Mittelwert</span>
      <span className="border-l border-[#d4d7d6] pl-[4px] pr-[6px]">Leitwährung: EUR, LS: EUR</span>
    </div>
  </div>
);

export default function App() {
  return (
    <div className="relative h-[910px] w-[2255px] overflow-hidden bg-white font-[Liberation_Sans,Arial,sans-serif] text-[11px] text-[#444] [text-rendering:geometricPrecision]">
      <ErdarbeitenWindow />
      <ElementWindow />
    </div>
  );
}
